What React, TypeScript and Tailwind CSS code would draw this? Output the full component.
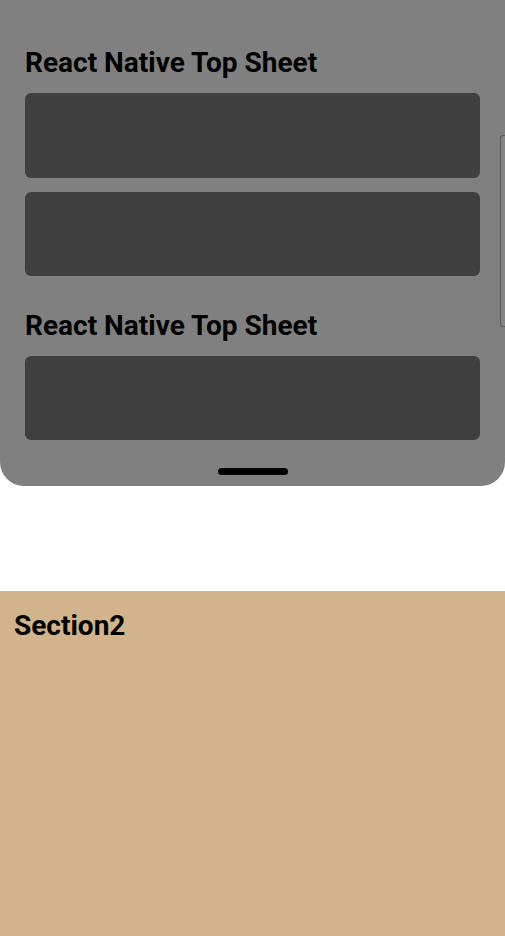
import React from "react";

export default function App() {
  const font = { fontFamily: "Roboto, 'Noto Sans', sans-serif" };
  return (
    <div className="w-[505px] h-[936px] bg-white flex flex-col overflow-hidden" style={font}>
      <div className="relative h-[486px] bg-[#808080] rounded-b-[24px] flex flex-col px-[25px] pt-[46px] shrink-0">
        <h2 className="text-[28px] leading-[33px] font-bold text-black">React Native Top Sheet</h2>
        <div className="mt-[14px] h-[85px] rounded-[6px] bg-[#404040]" />
        <div className="mt-[14px] h-[84px] rounded-[6px] bg-[#404040]" />
        <h2 className="mt-[33px] text-[28px] leading-[33px] font-bold text-black">React Native Top Sheet</h2>
        <div className="mt-[14px] h-[84px] rounded-[6px] bg-[#404040]" />
        <div className="absolute right-0 top-[135px] w-[5px] h-[192px] rounded-l-[3px] border border-r-0 border-[#5c5c5c] bg-[#858585]" />
        <div className="absolute left-[218px] top-[468px] w-[70px] h-[7px] rounded-full bg-black" />
      </div>
      <div className="h-[105px] shrink-0" />
      <div className="flex-1 bg-[#d2b48c] px-[14px] pt-[18px]">
        <h2 className="text-[28px] leading-[33px] font-bold text-black">Section2</h2>
      </div>
    </div>
  );
}
